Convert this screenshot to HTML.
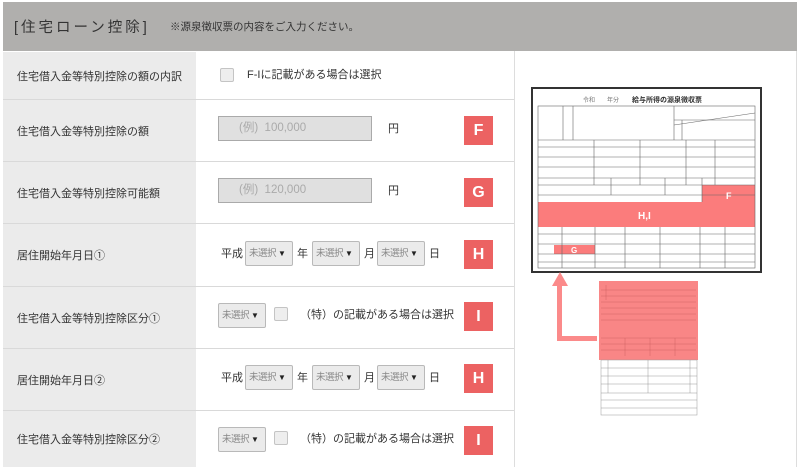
<!DOCTYPE html>
<html><head><meta charset="utf-8">
<style>
*{margin:0;padding:0;box-sizing:border-box}
body{width:800px;height:467px;overflow:hidden;background:#fff;position:relative;font-family:"Liberation Sans","Noto Sans CJK JP",sans-serif;color:#333;font-size:12px}
.a{position:absolute;white-space:nowrap}
.hd{left:3px;top:2px;width:794px;height:49px;background:#b0afad}
.lab{left:3px;width:193px;background:#ebebeb;display:flex;align-items:center;padding-left:14px;font-size:11px;color:#333}
.hl{left:3px;width:511px;height:1px;background:#d9d9d9}
.inp{width:154px;height:25px;background:#e0e0e0;border:1px solid #aaa;color:#aaa;font-size:11.5px;line-height:23px;padding-left:20px}
.sel{width:48px;height:25px;background:#ebebeb;border:1px solid #b9b9b9;border-radius:2px;font-size:9.5px;color:#888;line-height:23px;padding-left:3px;letter-spacing:-0.5px}
.sel b{color:#222;font-size:8px;margin-left:2px}
.tag{width:29px;height:29px;background:#ec6262;color:#fff;font-weight:bold;font-size:16px;text-align:center;line-height:29px}
.cb{width:14px;height:14px;border:1px solid #c4c4c4;border-radius:2px;background:#eee}
.t{font-size:11px;color:#333;line-height:14px}
</style></head><body>
<div class="a hd"></div>
<div class="a" style="left:14px;top:16px;font-size:14.5px;letter-spacing:3px;color:#333">[住宅ローン控除]</div>
<div class="a" style="left:170px;top:19px;font-size:10.5px;color:#333">※源泉徴収票の内容をご入力ください。</div>

<div class="a lab" style="top:52px;height:47px">住宅借入金等特別控除の額の内訳</div>
<div class="a lab" style="top:100px;height:61px">住宅借入金等特別控除の額</div>
<div class="a lab" style="top:162px;height:61px">住宅借入金等特別控除可能額</div>
<div class="a lab" style="top:224px;height:62px">居住開始年月日①</div>
<div class="a lab" style="top:287px;height:61px">住宅借入金等特別控除区分①</div>
<div class="a lab" style="top:349px;height:61px">居住開始年月日②</div>
<div class="a lab" style="top:411px;height:56px">住宅借入金等特別控除区分②</div>
<div class="a hl" style="top:99px"></div>
<div class="a hl" style="top:161px"></div>
<div class="a hl" style="top:223px"></div>
<div class="a hl" style="top:286px"></div>
<div class="a hl" style="top:348px"></div>
<div class="a hl" style="top:410px"></div>
<div class="a" style="left:514px;top:51px;width:1px;height:416px;background:#ddd"></div>
<div class="a" style="left:796px;top:51px;width:1px;height:416px;background:#ddd"></div>

<div class="a cb" style="left:220px;top:68px"></div>
<div class="a t" style="left:247px;top:68px">F-Iに記載がある場合は選択</div>

<div class="a inp" style="left:218px;top:116px">(例)&nbsp;&nbsp;100,000</div>
<div class="a t" style="left:388px;top:122px">円</div>
<div class="a tag" style="left:464px;top:116px">F</div>

<div class="a inp" style="left:218px;top:178px">(例)&nbsp;&nbsp;120,000</div>
<div class="a t" style="left:388px;top:184px">円</div>
<div class="a tag" style="left:464px;top:178px">G</div>

<div class="a t" style="left:221px;top:247px">平成</div>
<div class="a sel" style="left:245px;top:241px">未選択<b>▼</b></div>
<div class="a t" style="left:297px;top:247px">年</div>
<div class="a sel" style="left:312px;top:241px">未選択<b>▼</b></div>
<div class="a t" style="left:364px;top:247px">月</div>
<div class="a sel" style="left:377px;top:241px">未選択<b>▼</b></div>
<div class="a t" style="left:429px;top:247px">日</div>
<div class="a tag" style="left:464px;top:240px">H</div>

<div class="a sel" style="left:218px;top:303px">未選択<b>▼</b></div>
<div class="a cb" style="left:274px;top:307px"></div>
<div class="a t" style="left:300px;top:308px">（特）の記載がある場合は選択</div>
<div class="a tag" style="left:464px;top:302px">I</div>

<div class="a t" style="left:221px;top:371px">平成</div>
<div class="a sel" style="left:245px;top:365px">未選択<b>▼</b></div>
<div class="a t" style="left:297px;top:371px">年</div>
<div class="a sel" style="left:312px;top:365px">未選択<b>▼</b></div>
<div class="a t" style="left:364px;top:371px">月</div>
<div class="a sel" style="left:377px;top:365px">未選択<b>▼</b></div>
<div class="a t" style="left:429px;top:371px">日</div>
<div class="a tag" style="left:464px;top:364px">H</div>

<div class="a sel" style="left:218px;top:427px">未選択<b>▼</b></div>
<div class="a cb" style="left:274px;top:431px"></div>
<div class="a t" style="left:300px;top:432px">（特）の記載がある場合は選択</div>
<div class="a tag" style="left:464px;top:426px">I</div>

<svg class="a" style="left:0;top:0" width="800" height="467">
<g fill="#fb7c7c">
<rect x="702" y="185" width="53" height="17"/>
<rect x="538" y="202" width="217" height="25"/>
<rect x="554" y="245" width="41" height="9"/>
</g>
<g stroke="#666" stroke-width="0.6" fill="none">
<rect x="538" y="106" width="217" height="162"/>
<line x1="538" y1="140" x2="755" y2="140"/><line x1="538" y1="147" x2="755" y2="147"/>
<line x1="538" y1="157" x2="755" y2="157"/><line x1="538" y1="167" x2="755" y2="167"/>
<line x1="538" y1="178" x2="755" y2="178"/><line x1="538" y1="185" x2="755" y2="185"/>
<line x1="538" y1="195" x2="755" y2="195"/>
<line x1="538" y1="234" x2="755" y2="234"/><line x1="538" y1="244" x2="755" y2="244"/>
<line x1="538" y1="254" x2="755" y2="254"/><line x1="538" y1="262" x2="755" y2="262"/>
<line x1="563" y1="106" x2="563" y2="140"/><line x1="573" y1="106" x2="573" y2="140"/>
<line x1="674" y1="106" x2="674" y2="140"/><line x1="682" y1="120" x2="682" y2="140"/>
<line x1="674" y1="120" x2="755" y2="120"/><line x1="674" y1="125" x2="755" y2="113"/>
<line x1="594" y1="140" x2="594" y2="185"/><line x1="640" y1="140" x2="640" y2="185"/>
<line x1="686" y1="140" x2="686" y2="185"/><line x1="715" y1="140" x2="715" y2="185"/>
<line x1="611" y1="178" x2="611" y2="195"/><line x1="665" y1="178" x2="665" y2="195"/>
<line x1="702" y1="178" x2="702" y2="202"/>
<line x1="562" y1="227" x2="562" y2="268"/><line x1="595" y1="227" x2="595" y2="268"/>
<line x1="625" y1="227" x2="625" y2="268"/><line x1="660" y1="227" x2="660" y2="268"/>
<line x1="700" y1="227" x2="700" y2="268"/><line x1="725" y1="227" x2="725" y2="268"/>
</g>
<text x="583" y="102" font-size="6" fill="#777" font-family="Liberation Sans,Noto Sans CJK JP,sans-serif">令和　　年分</text>
<text x="632" y="102" font-size="7" font-weight="bold" fill="#333" font-family="Liberation Sans,Noto Sans CJK JP,sans-serif">給与所得の源泉徴収票</text>
<text x="726" y="199" font-size="9" fill="#fff" font-weight="bold" font-family="Liberation Sans,sans-serif">F</text>
<text x="638" y="219" font-size="10" fill="#fff" font-weight="bold" font-family="Liberation Sans,sans-serif">H,I</text>
<text x="571" y="253" font-size="8" fill="#fff" font-weight="bold" font-family="Liberation Sans,sans-serif">G</text>
<rect x="532" y="88" width="229" height="184" fill="none" stroke="#333" stroke-width="2"/>
<g fill="#fb8a8a">
<polygon points="560,272 552,286 568,286"/>
<rect x="557" y="285" width="5" height="56"/>
<rect x="557" y="336" width="40" height="5"/>
</g>
<rect x="599" y="281" width="99" height="79" fill="#f98686"/>
<g stroke="#c85a5a" stroke-width="0.4" fill="none">
<line x1="601" y1="290" x2="696" y2="290"/><line x1="601" y1="296" x2="696" y2="296"/>
<line x1="601" y1="302" x2="696" y2="302"/><line x1="601" y1="308" x2="696" y2="308"/>
<line x1="601" y1="314" x2="696" y2="314"/><line x1="601" y1="320" x2="696" y2="320"/>
<line x1="601" y1="338" x2="696" y2="338"/><line x1="601" y1="344" x2="696" y2="344"/>
<line x1="601" y1="350" x2="696" y2="350"/>
<line x1="606" y1="285" x2="606" y2="300"/><line x1="625" y1="338" x2="625" y2="356"/>
<line x1="650" y1="338" x2="650" y2="356"/><line x1="675" y1="338" x2="675" y2="356"/>
</g>
<g stroke="#999" stroke-width="0.5" fill="none">
<rect x="601" y="360" width="96" height="55"/>
<line x1="601" y1="368" x2="697" y2="368"/><line x1="601" y1="376" x2="697" y2="376"/>
<line x1="601" y1="384" x2="697" y2="384"/><line x1="601" y1="393" x2="697" y2="393"/>
<line x1="601" y1="400" x2="697" y2="400"/><line x1="601" y1="408" x2="697" y2="408"/>
<line x1="608" y1="360" x2="608" y2="393"/><line x1="648" y1="360" x2="648" y2="393"/>
<line x1="690" y1="360" x2="690" y2="393"/>
</g>
</svg>
</body></html>
